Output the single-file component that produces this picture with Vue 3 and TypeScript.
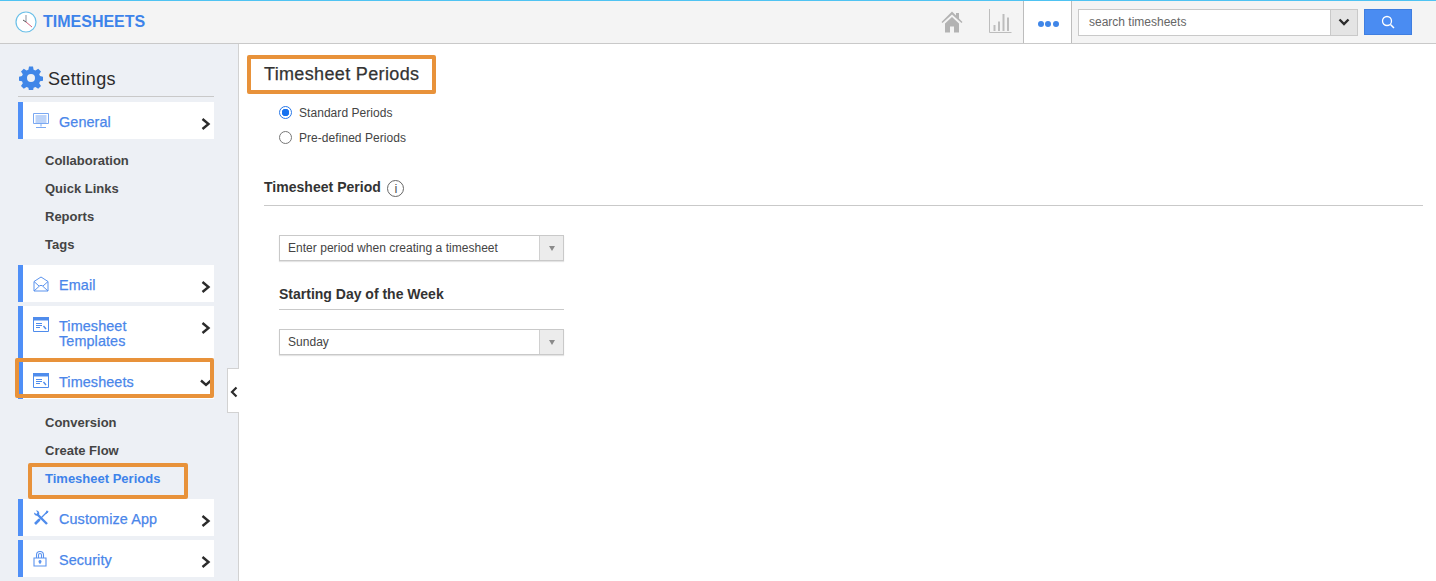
<script setup lang="ts">
interface NavItem { label: string[]; icon: string; open?: boolean; boxed?: boolean; subs?: { label: string; active?: boolean }[] }
const items: NavItem[] = [
  { label: ['General'], icon: 'monitor', subs: [{ label: 'Collaboration' }, { label: 'Quick Links' }, { label: 'Reports' }, { label: 'Tags' }] },
  { label: ['Email'], icon: 'mail' },
  { label: ['Timesheet', 'Templates'], icon: 'sheet' },
  { label: ['Timesheets'], icon: 'sheet', open: true, boxed: true, subs: [{ label: 'Conversion' }, { label: 'Create Flow' }, { label: 'Timesheet Periods', active: true }] },
  { label: ['Customize App'], icon: 'tools' },
  { label: ['Security'], icon: 'lock' },
]
</script>

<template>
  <div class="app">
    <header class="topbar">
      <div class="brand">
        <svg class="clock" width="22" height="22" viewBox="0 0 22 22">
          <circle cx="11" cy="11" r="10" fill="#fff" stroke="#6cc0e8" stroke-width="1.2" />
          <path d="M11 4v7" stroke="#8a8f9c" stroke-width="1" fill="none" />
          <path d="M11 11l6 5" stroke="#d0607a" stroke-width="1" fill="none" />
          <path d="M11 11l-3-2" stroke="#555" stroke-width="1" fill="none" />
        </svg>
        <span>TIMESHEETS</span>
      </div>
      <div class="top-right">
        <svg class="ico-home" width="22" height="22" viewBox="0 0 22 22">
          <path d="M11 0.5L0.5 11l1 1L11 3.5 20.5 12l1-1-3.5-3.5V2h-3v2.500z" fill="#b3b3b3" />
          <path d="M4 12.500L11 6l7 6.500V21.500h-5V15.500H9V21.500H4z" fill="#b3b3b3" />
        </svg>
        <svg class="ico-chart" width="23" height="24" viewBox="0 0 23 24">
          <path d="M.5 0v23.500h22" fill="none" stroke="#bdbdbd" stroke-width="1" />
          <path d="M4.500 16h2v6h-2zM9 12.500h2v9.500H9zM13.500 5h2v17h-2zM18 8.500h2V22h-2z" fill="#bdbdbd" />
        </svg>
        <div class="more"><i></i><i></i><i></i></div>
        <div class="search">
          <div class="search-input">search timesheets</div>
          <div class="search-drop">
            <svg width="12" height="8" viewBox="0 0 12 8"><path d="M1.500 1.500L6 6l4.500-4.500" fill="none" stroke="#2b2b2b" stroke-width="2.400" /></svg>
          </div>
          <button class="search-btn" type="button">
            <svg width="14" height="14" viewBox="0 0 14 14"><circle cx="6" cy="6" r="4.500" fill="none" stroke="#fff" stroke-width="1.300" /><path d="M9.500 9.500L13 13" stroke="#fff" stroke-width="1.500" /></svg>
          </button>
        </div>
      </div>
    </header>

    <div class="body">
      <aside class="sidebar">
        <h2 class="settings">
          <svg class="gear" width="24" height="24" viewBox="0 0 24 24">
            <path fill="#3f86e8" fill-rule="evenodd" d="M10 0.500h4l.6 3.200 1.900.8 2.700-1.800 2.800 2.800-1.800 2.700.8 1.900 3.200.6v4l-3.200.6-.8 1.900 1.800 2.700-2.800 2.800-2.700-1.800-1.900.8-.6 3.200h-4l-.6-3.200-1.900-.8-2.700 1.800-2.800-2.800 1.800-2.700-.8-1.900-3.200-.6v-4l3.200-.6.8-1.900-1.800-2.700 2.800-2.800 2.700 1.800 1.900-.8zM12 8a4 4 0 1 0 0 8 4 4 0 0 0 0-8z" />
          </svg>
          <span class="settings-text">Settings</span>
        </h2>
        <nav class="nav">
          <template v-for="item in items" :key="item.label[0]">
            <div class="item" :class="{ boxed: item.boxed, tall: item.label.length > 1 }">
              <span class="item-icon">
                <svg v-if="item.icon === 'monitor'" width="16" height="16" viewBox="0 0 16 16" fill="none" stroke="#7aa8f2" stroke-width="1">
                  <path d="M.5.500h15v10H.5zM2.500 3h11M2.500 5h11M2.500 7h11M2.500 9h11M8 10.500v3M3 14.500h10" />
                </svg>
                <svg v-else-if="item.icon === 'mail'" width="16" height="16" viewBox="0 0 16 16" fill="none" stroke="#5b93ee" stroke-width="1">
                  <path d="M1 5.500L8 1l7 4.500v9.500H1zM1 5.500l5 4.500M15 5.500l-5 4.500M1 15l6-5.500h2l6 5.500" />
                </svg>
                <svg v-else-if="item.icon === 'sheet'" width="16" height="15" viewBox="0 0 16 15" fill="none">
                  <path d="M.5.500h15v14H.5z" stroke="#4f8cec" />
                  <path d="M0 0h16v3.500H0z" fill="#4f8cec" />
                  <path d="M3 6.500h6M3 8.500h6M3 10.500h4" stroke="#4f8cec" />
                  <path d="M10.500 9l2.500 3" stroke="#4f8cec" stroke-width="1.400" />
                </svg>
                <svg v-else-if="item.icon === 'tools'" width="16" height="16" viewBox="0 0 16 16" fill="none" stroke="#4f8cec">
                  <path d="M4.500 4.500L14 14" stroke-width="2.400" />
                  <path d="M1 2.500c0 2.500 2 4 4.500 3l.5-.5c1-2.500-.5-4.500-3-4.500l1.500 2-1 1.500z" fill="#4f8cec" stroke="none" />
                  <path d="M13 3L6 10" stroke-width="1.300" />
                  <path d="M6.500 9.500L2 14" stroke-width="2.600" />
                  <path d="M12.500 3.500L14 .8l1.200 1.200-2.300 1.800" fill="#4f8cec" stroke-width="1" />
                </svg>
                <svg v-else width="14" height="16" viewBox="0 0 14 16" fill="none" stroke="#5b93ee" stroke-width="1.100">
                  <path d="M1 7h12v8H1zM3.500 7V4a3.500 3.500 0 0 1 7 0v3M5.500 7V4a1.500 1.500 0 0 1 3 0v3" />
                  <circle cx="7" cy="10.500" r="1" fill="#5b93ee" />
                  <path d="M7 11v2" />
                </svg>
              </span>
              <span class="item-label"><span v-for="l in item.label" :key="l">{{ l }}</span></span>
              <svg class="chev" width="10" height="12" viewBox="0 0 10 12" v-if="!item.open"><path d="M1.500 1L7.500 6l-6 5" fill="none" stroke="#2b2b2b" stroke-width="2.400" /></svg>
              <svg class="chev-down" width="12" height="10" viewBox="0 0 12 10" v-else><path d="M1 2.500L6 7l5-4.500" fill="none" stroke="#2b2b2b" stroke-width="2.400" /></svg>
            </div>
            <ul v-if="item.subs" class="subs" :class="{ 'after-box': item.boxed }">
              <li v-for="s in item.subs" :key="s.label" :class="{ active: s.active }">{{ s.label }}</li>
            </ul>
          </template>
        </nav>
        <div class="collapse">
          <svg width="8" height="12" viewBox="0 0 8 12"><path d="M6.500 1.500L2 6l4.500 4.500" fill="none" stroke="#2b2b2b" stroke-width="2.200" /></svg>
        </div>
      </aside>

      <main class="main">
        <h1 class="title">Timesheet Periods</h1>
        <div class="radios">
          <label class="radio"><span class="dot on"></span>Standard Periods</label>
          <label class="radio"><span class="dot"></span>Pre-defined Periods</label>
        </div>
        <div class="section-head">
          <span>Timesheet Period</span>
          <span class="info">i</span>
        </div>
        <div class="form">
          <div class="select"><span>Enter period when creating a timesheet</span><b><i></i></b></div>
          <h3 class="sub-head">Starting Day of the Week</h3>
          <div class="select"><span>Sunday</span><b><i></i></b></div>
        </div>
      </main>
    </div>
  </div>
</template>

<style>
html, body { margin: 0; background: #fff; overflow: hidden; }
</style>

<style scoped>
* { box-sizing: border-box; }
.app { width: 1436px; height: 581px; font-family: "Liberation Sans", Arial, sans-serif; display: flex; flex-direction: column; overflow: hidden; color: #333; }
.topbar { height: 44px; flex: none; border-top: 1px solid #4fc3f2; border-bottom: 1px solid #c9c9c9; background: #f4f4f4; display: flex; justify-content: space-between; align-items: stretch; }
.brand { display: flex; align-items: center; padding-left: 15px; gap: 6px; color: #3d83ea; font-weight: 700; font-size: 16px; }
.clock { margin-top: -1px; }
.top-right { display: flex; align-items: center; }
.ico-home { margin-right: 26px; margin-top: -1px; }
.ico-chart { margin-right: 11px; margin-top: -3px; }
.more { width: 49px; align-self: stretch; background: #fff; border-left: 1px solid #bdbdbd; border-right: 1px solid #bdbdbd; display: flex; align-items: center; justify-content: center; gap: 1.5px; padding: 4px 0 0 1px; }
.more i { width: 6px; height: 6px; border-radius: 50%; background: #3f86e8; }
.search { display: flex; align-items: center; padding: 0 24px 0 6px; }
.search-input { width: 252px; height: 27px; background: #fff; border: 1px solid #c9c9c9; border-right: none; font-size: 12px; line-height: 25px; padding-left: 10px; color: #666; }
.search-drop { width: 28px; height: 27px; background: #e4e4e4; border: 1px solid #c9c9c9; display: flex; align-items: center; justify-content: center; margin-right: 6px; }
.search-btn { width: 48px; height: 26px; background: #4a8cf2; border: 1px solid #3f7ee0; padding: 0; display: flex; align-items: center; justify-content: center; }

.body { flex: 1; display: flex; min-height: 0; }
.sidebar { width: 239px; flex: none; background: #edf0f5; border-right: 1px solid #d2d2d2; padding: 19px 24px 0 18px; position: relative; }
.settings { margin: 0; height: 34px; border-bottom: 1px solid #c9c9c9; display: flex; align-items: center; gap: 5px; padding: 0 0 2px 1px; font-size: 18px; letter-spacing: 0.35px; font-weight: 400; color: #2b2b2b; }
.gear { margin-top: -2px; }
.settings-text { margin-top: 2px; }
.nav { margin-top: 5px; display: flex; flex-direction: column; }
.item { position: relative; width: 196px; min-height: 37px; background: #fff; border-left: 5px solid #4f8ff7; display: flex; align-items: center; margin-bottom: 4px; color: #4a86ea; font-size: 14.4px; letter-spacing: 0.1px; font-weight: 400; -webkit-text-stroke: 0.25px #4a86ea; }
.item-icon { width: 36px; flex: none; display: flex; justify-content: flex-start; padding-left: 10px; }
.item-label { display: flex; flex-direction: column; line-height: 15px; padding-top: 3px; }
.chev { position: absolute; right: 3px; top: 16px; }
.chev-down { position: absolute; right: 2px; top: 16px; }
.item.tall { height: 52px; align-items: flex-start; padding-top: 11px; }
.item.tall .item-label { padding-top: 2px; }
.boxed::after { content: ""; box-sizing: border-box; position: absolute; left: -8px; right: 0; top: -4px; height: 40px; border: 4px solid #e8923a; border-radius: 2px; }
.subs { list-style: none; margin: 0 0 0 27px; padding: 4px 0 6px; }
.subs.after-box { padding-top: 6px; }
.subs li { height: 28px; line-height: 28px; font-size: 13px; font-weight: 700; color: #444; position: relative; }
.subs li.active { color: #3d83ea; }
.subs li.active::after { content: ""; box-sizing: border-box; position: absolute; left: -17px; top: -2px; width: 160px; height: 36px; border: 4px solid #e8923a; border-radius: 2px; }
.collapse { position: absolute; right: -1px; top: 324px; width: 12px; height: 45px; background: #fff; border: 1px solid #d2d2d2; border-right: none; display: flex; align-items: center; justify-content: center; padding-top: 2px; }

.main { flex: 1; padding: 11px 13px 0 25px; position: relative; }
.title { margin: 0; height: 39px; line-height: 38px; font-size: 18px; letter-spacing: 0.35px; font-weight: 400; color: #333; position: relative; -webkit-text-stroke: 0.25px #333; }
.title::after { content: ""; box-sizing: border-box; position: absolute; left: -17px; top: 0; width: 189px; height: 39px; border: 4px solid #e8923a; border-radius: 2px; }
.radios { margin: 6px 0 0 15px; display: flex; flex-direction: column; }
.radio { height: 25px; display: flex; align-items: center; gap: 7px; font-size: 12px; letter-spacing: 0.05px; color: #444; }
.dot { width: 13px; height: 13px; border-radius: 50%; border: 1px solid #777; background: #fff; }
.dot.on { border-color: #2a78e8; background: radial-gradient(circle, #1672f0 0 3.5px, #fff 4px); }
.section-head { margin-top: 18px; height: 38px; border-bottom: 1px solid #c9c9c9; display: flex; align-items: center; gap: 6.5px; font-size: 14px; letter-spacing: 0.03px; font-weight: 700; color: #333; }
.info { width: 17px; height: 17px; margin-top: 3px; border: 1px solid #666; border-radius: 50%; display: flex; align-items: center; justify-content: center; font-weight: 400; font-size: 13px; color: #555; }
.form { width: 285px; margin: 29px 0 0 15px; }
.select { height: 26px; border: 1px solid #c9c9c9; box-shadow: 0 1px 1px #e4e4e4; display: flex; justify-content: space-between; font-size: 12px; letter-spacing: 0.03px; line-height: 24px; padding-left: 8px; color: #444; background: #fff; }
.select b { width: 24px; background: #ececec; border-left: 1px solid #d0d0d0; display: flex; align-items: center; justify-content: center; }
.select i { width: 0; height: 0; border-left: 3.5px solid transparent; border-right: 3.5px solid transparent; border-top: 5px solid #8a8a8a; }
.sub-head { margin: 0 0 19px; padding-top: 26px; height: 49px; border-bottom: 1px solid #c9c9c9; font-size: 14px; line-height: 15px; font-weight: 700; color: #333; }
</style>
